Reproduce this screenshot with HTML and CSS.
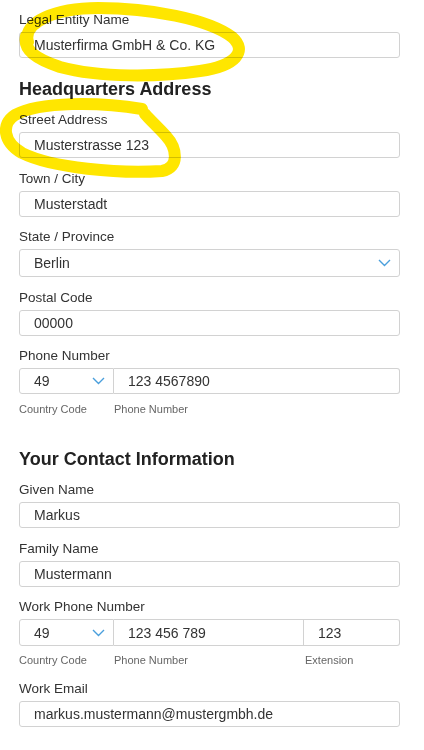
FILE: index.html
```html
<!DOCTYPE html>
<html lang="en">
<head>
  <meta charset="UTF-8" />
  <title>Company Details</title>
  <link rel="stylesheet" href="styles.css">
</head>
<body>
  <form class="form">
    <div class="field">
      <label for="entity">Legal Entity Name</label>
      <input type="text" id="entity" value="Musterfirma GmbH &amp; Co. KG" />
    </div>

    <h2>Headquarters Address</h2>

    <div class="field">
      <label for="street">Street Address</label>
      <input type="text" id="street" value="Musterstrasse 123" />
    </div>

    <div class="field">
      <label for="city">Town / City</label>
      <input type="text" id="city" value="Musterstadt" />
    </div>

    <div class="field">
      <label for="state">State / Province</label>
      <div class="select-wrap">
        <select id="state"><option>Berlin</option></select>
        <svg class="chevron" width="13" height="8" viewBox="0 0 13 8"><path d="M1 1l5.5 5.5L12 1" /></svg>
      </div>
    </div>

    <div class="field">
      <label for="zip">Postal Code</label>
      <input type="text" id="zip" value="00000" />
    </div>

    <div class="field field-phone">
      <label for="phone">Phone Number</label>
      <div class="phone-row">
        <div class="select-wrap">
          <select><option>49</option></select>
          <svg class="chevron" width="13" height="8" viewBox="0 0 13 8"><path d="M1 1l5.5 5.5L12 1" /></svg>
        </div>
        <input type="text" id="phone" value="123 4567890" />
      </div>
      <div class="hints">
        <span>Country Code</span>
        <span>Phone Number</span>
      </div>
    </div>

    <h2 class="second">Your Contact Information</h2>

    <div class="field">
      <label for="given">Given Name</label>
      <input type="text" id="given" value="Markus" />
    </div>

    <div class="field">
      <label for="family">Family Name</label>
      <input type="text" id="family" value="Mustermann" />
    </div>

    <div class="field field-phone">
      <label for="work">Work Phone Number</label>
      <div class="phone-row with-ext">
        <div class="select-wrap">
          <select><option>49</option></select>
          <svg class="chevron" width="13" height="8" viewBox="0 0 13 8"><path d="M1 1l5.5 5.5L12 1" /></svg>
        </div>
        <input type="text" id="work" value="123 456 789" />
        <input type="text" value="123" />
      </div>
      <div class="hints with-ext">
        <span>Country Code</span>
        <span>Phone Number</span>
        <span>Extension</span>
      </div>
    </div>

    <div class="field">
      <label for="email">Work Email</label>
      <input type="text" id="email" value="markus.mustermann@mustergmbh.de" />
    </div>
  </form>

  <!-- marker scribbles from the screenshot -->
  <svg class="marks" width="424" height="750" viewBox="0 0 424 750">
    <path d="M28 42 C22 22 56 8 98 8 C150 8 208 19 232 37 C248 51 236 66 200 71 C160 77 100 78 60 67 C36 59 23 50 26 36" />
    <path d="M142 109 C100 102 40 101 15 115 C1 124 3 142 22 153 C52 168 120 174 162 171 C180 168 177 148 166 136 C158 127 150 120 145 114" />
  </svg>
</body>
</html>
```

FILE: styles.css
```css
body { margin: 0; position: relative; font-family: "Liberation Sans", Arial, sans-serif; color: #333; background: #fff; }
.form { display: flex; flex-direction: column; padding: 12px 24px 0 19px; }

.field { display: flex; flex-direction: column; margin-bottom: 12.5px; }
.field-phone { margin-bottom: 14px; }
label { font-size: 13.5px; line-height: 16px; height: 16px; margin-bottom: 4px; color: #333; }

h2 { font-size: 18px; line-height: 24px; font-weight: bold; color: #222; margin: 6.5px 0 11px; }
h2.second { margin-top: 17px; }

input, select {
  box-sizing: border-box; height: 26px; width: 100%; margin: 0;
  padding: 0 14px; font-family: "Liberation Sans", Arial, sans-serif;
  font-size: 14px; color: #333; background: #fff;
  border: 1px solid #d2d2d2; border-radius: 3px; outline: none;
}
select { height: 28px; appearance: none; -webkit-appearance: none; }

.select-wrap { position: relative; }
.chevron { position: absolute; right: 9px; top: 50%; margin-top: -4px; }
.chevron path { fill: none; stroke: #4a9fdc; stroke-width: 1.4; }

.phone-row { display: grid; grid-template-columns: 95px 1fr; height: 26px; }
.phone-row.with-ext { grid-template-columns: 95px 190px 1fr; height: 27px; }
.phone-row select, .phone-row input { height: 100%; }
.phone-row .select-wrap select { border-radius: 3px 0 0 3px; }
.phone-row input { border-left: none; border-radius: 0; }
.phone-row input:last-child { border-radius: 0 3px 3px 0; }

.hints { display: grid; grid-template-columns: 95px 1fr; margin-top: 8px; font-size: 11px; line-height: 14px; color: #666; }
.hints.with-ext { grid-template-columns: 95px 191px 1fr; margin-top: 7px; }

.marks { position: absolute; left: 0; top: 0; pointer-events: none; mix-blend-mode: multiply; }
.marks path { fill: none; stroke: #ffe600; stroke-width: 12; stroke-linecap: round; stroke-linejoin: round; }
```
